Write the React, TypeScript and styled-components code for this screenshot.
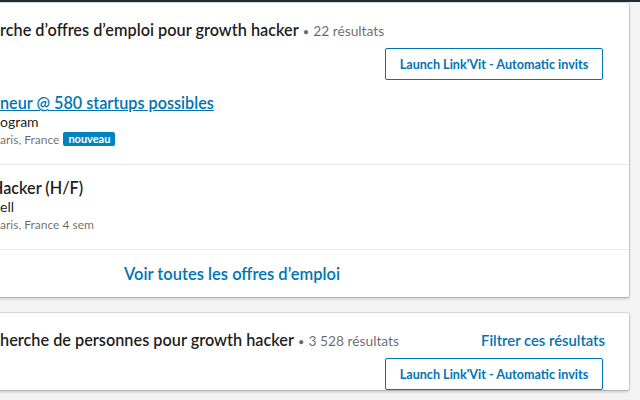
import styled, {createGlobalStyle} from "styled-components";

const GlobalStyle = createGlobalStyle`
  html, body {
    margin: 0;
    padding: 0;
    background: #f3f3f3;
    font-family: Lato, "Open Sans", sans-serif;
    -webkit-font-smoothing: antialiased;
  }
`;

const TopBar = styled.div`
  height: 2px;
  background: #1f2d38;
`;

const Page = styled.div`
  width: 640px;
  height: 398px;
  overflow: hidden;
  padding-top: 1px;
  box-sizing: border-box;
`;

const Card = styled.section`
  margin-left: -165px;
  width: 794px;
  background: #ffffff;
  border-radius: 2px;
  box-shadow: 0 0 0 1px rgba(0, 0, 0, .12), 0 2px 3px rgba(0, 0, 0, .18);
  margin-bottom: 16px;
`;

const Header = styled.div`
  padding: 15px 24px 0 165px;
`;

const HeaderRow = styled.div`
  display: flex;
  justify-content: space-between;
  align-items: baseline;
  height: 24px;
  line-height: 24px;
  overflow: hidden;
`;

const Title = styled.h3`
  margin: 0;
  font-size: 16.3px;
  font-weight: 600;
  color: rgba(0, 0, 0, .9);
  white-space: nowrap;
`;

const Count = styled.span`
  font-size: 13.8px;
  font-weight: 400;
  color: rgba(0, 0, 0, .6);
  &::before {
    content: '•';
    margin: 0 4px 0 4px;
    font-size: 11px;
  }
`;

const FilterLink = styled.a`
  font-size: 14.8px;
  font-weight: 600;
  color: #0073b1;
  text-decoration: none;
`;

const ButtonRow = styled.div`
  display: flex;
  justify-content: flex-end;
  margin-top: 6px;
`;

const LaunchButton = styled.button`
  width: 218px;
  height: 32px;
  margin-right: 2px;
  border: 1px solid #0073b1;
  border-radius: 2px;
  background: #fff;
  color: #0073b1;
  font-family: inherit;
  font-size: 12.6px;
  font-weight: 700;
  padding: 0;
`;

const JobList = styled.ul`
  list-style: none;
  margin: 0;
  padding: 0;
`;

const JobItem = styled.li`
  height: 54px;
  padding: 13px 24px 17px 165px;
  border-bottom: 1px solid #e6e9ec;
  overflow: hidden;
`;

const JobTitle = styled.a<{ $active?: boolean; $shift?: number }>`
  display: block;
  font-size: 16.2px;
  line-height: 20px;
  font-weight: 600;
  white-space: nowrap;
  color: ${p => p.$active ? '#0073b1' : 'rgba(0, 0, 0, .9)'};
  text-decoration: ${p => p.$active ? 'underline' : 'none'};
  margin-left: ${p => p.$shift || 0}px;
`;

const Company = styled.div`
  font-size: 14px;
  line-height: 18px;
  color: rgba(0, 0, 0, .9);
`;

const Location = styled.div`
  display: flex;
  align-items: center;
  gap: 4px;
  height: 16px;
  font-size: 12px;
  color: rgba(0, 0, 0, .6);
`;

const NewBadge = styled.span`
  display: inline-block;
  background: #0084bf;
  color: #fff;
  font-size: 11px;
  font-weight: 700;
  line-height: 14px;
  padding: 0 5px;
  border-radius: 2px;
`;

const Footer = styled.div`
  height: 47px;
  display: flex;
  align-items: center;
  justify-content: center;
`;

const SeeAll = styled.a`
  font-size: 16.5px;
  font-weight: 600;
  color: #0073b1;
  text-decoration: none;
`;

const jobs = [
    {title: "neur @ 580 startups possibles", company: "ogram", place: "aris, France", isNew: true, active: true, shift: 0},
    {title: "Hacker (H/F)", company: "ell", place: "aris, France 4 sem", isNew: false, active: false, shift: -9},
];

export default function App() {
    return (
        <>
            <GlobalStyle/>
            <TopBar/>
            <Page>
                <Card>
                    <Header>
                        <HeaderRow>
                            <Title>rche d’offres d’emploi pour growth hacker<Count>22 résultats</Count></Title>
                        </HeaderRow>
                        <ButtonRow>
                            <LaunchButton>Launch Link'Vit - Automatic invits</LaunchButton>
                        </ButtonRow>
                    </Header>
                    <JobList>
                        {jobs.map((job, i) => (
                            <JobItem key={i}>
                                <JobTitle $active={job.active} $shift={job.shift}>{job.title}</JobTitle>
                                <Company>{job.company}</Company>
                                <Location>
                                    {job.place}
                                    {job.isNew && <NewBadge>nouveau</NewBadge>}
                                </Location>
                            </JobItem>
                        ))}
                    </JobList>
                    <Footer>
                        <SeeAll>Voir toutes les offres d’emploi</SeeAll>
                    </Footer>
                </Card>
                <Card>
                    <Header>
                        <HeaderRow>
                            <Title>herche de personnes pour growth hacker<Count>3 528 résultats</Count></Title>
                            <FilterLink>Filtrer ces résultats</FilterLink>
                        </HeaderRow>
                        <ButtonRow>
                            <LaunchButton>Launch Link'Vit - Automatic invits</LaunchButton>
                        </ButtonRow>
                    </Header>
                </Card>
            </Page>
        </>
    );
}
